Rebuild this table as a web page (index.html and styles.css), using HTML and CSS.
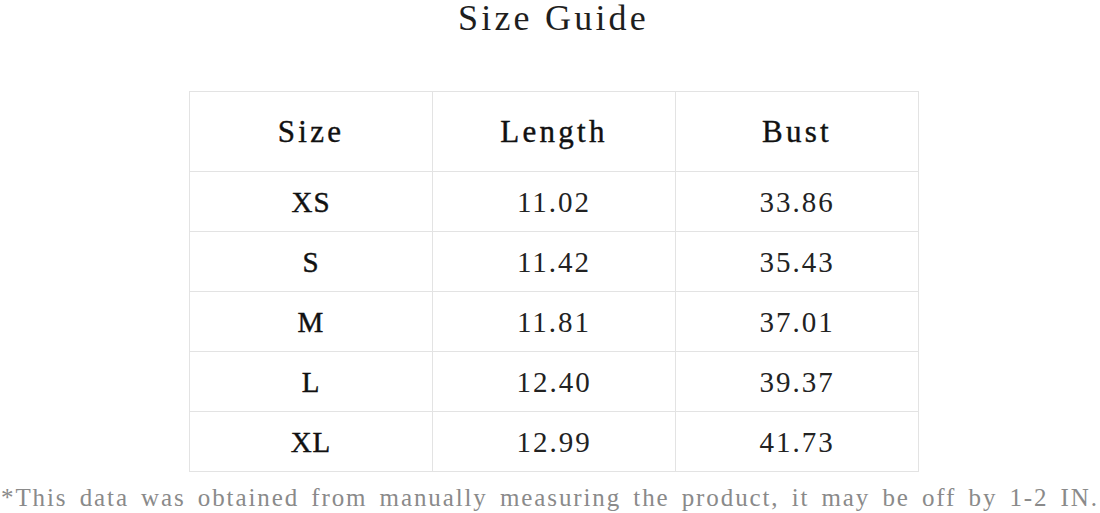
FILE: index.html
```html
<!DOCTYPE html>
<html>
<head>
<meta charset="utf-8">
<link rel="stylesheet" href="styles.css">
</head>
<body>
<div class="page">
  <h1 class="title">Size Guide</h1>
  <table class="guide">
    <thead>
      <tr><th>Size</th><th>Length</th><th>Bust</th></tr>
    </thead>
    <tbody>
      <tr><td class="sz">XS</td><td>11.02</td><td>33.86</td></tr>
      <tr><td class="sz">S</td><td>11.42</td><td>35.43</td></tr>
      <tr><td class="sz">M</td><td>11.81</td><td>37.01</td></tr>
      <tr><td class="sz">L</td><td>12.40</td><td>39.37</td></tr>
      <tr><td class="sz">XL</td><td>12.99</td><td>41.73</td></tr>
    </tbody>
  </table>
  <p class="note">*This data was obtained from manually measuring the product, it may be off by 1-2 IN.</p>
</div>
</body>
</html>
```

FILE: styles.css
```css
html, body {
  margin: 0;
  padding: 0;
  background: #ffffff;
}
body {
  font-family: "Liberation Serif", "Noto Sans CJK SC", serif;
  color: #222;
}
.page {
  display: flex;
  flex-direction: column;
  width: 1100px;
}
.title {
  margin: 0;
  padding-left: 7px;
  height: 36px;
  line-height: 36px;
  font-size: 36px;
  font-weight: normal;
  letter-spacing: 3.2px;
  text-align: center;
  color: #1e1e1e;
}
.guide {
  margin: 55px 0 0 189px;
  width: 730px;
  border-collapse: collapse;
  table-layout: fixed;
}
.guide th, .guide td {
  border: 1px solid #e3e3e3;
  padding: 0;
  text-align: center;
  vertical-align: middle;
}
.guide th {
  height: 79px;
  line-height: 36px;
  font-size: 31px;
  font-weight: normal;
  letter-spacing: 3.3px;
  color: #111;
  -webkit-text-stroke: 0.4px #111;
}
.guide td {
  height: 59px;
  line-height: 36px;
  font-size: 29px;
  letter-spacing: 2px;
  color: #222;
}
.guide td.sz {
  letter-spacing: 1px;
  color: #111;
  -webkit-text-stroke: 0.4px #111;
}
.note {
  margin: 0;
  height: 42px;
  line-height: 52px;
  font-size: 25px;
  letter-spacing: 1.9px;
  word-spacing: 4px;
  white-space: nowrap;
  text-align: center;
  color: #8a8a8a;
}
```
